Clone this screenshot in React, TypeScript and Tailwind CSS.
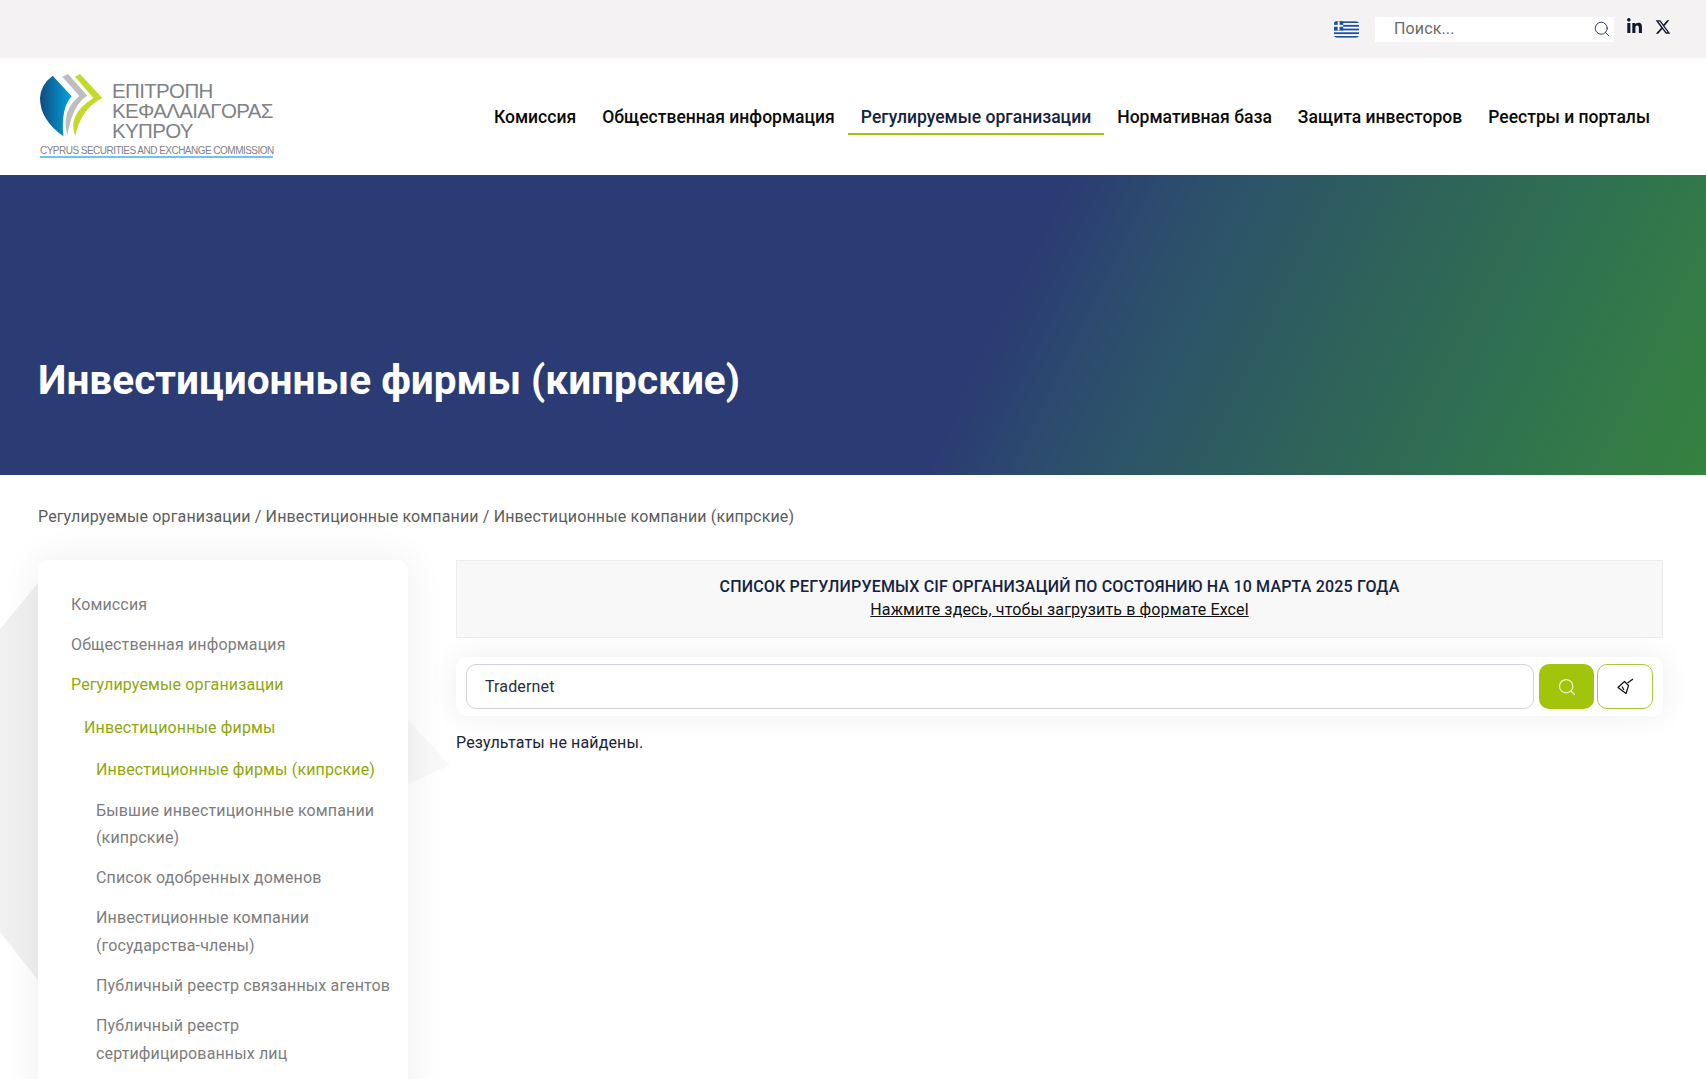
import { Search } from "lucide-react";
import { FaLinkedinIn } from "react-icons/fa";

const nav = [
  "Комиссия",
  "Общественная информация",
  "Регулируемые организации",
  "Нормативная база",
  "Защита инвесторов",
  "Реестры и порталы",
];

function Flag() {
  return (
    <svg width="25" height="17" viewBox="0 0 27 18">
      <defs>
        <clipPath id="flagClip">
          <rect width="27" height="18" rx="3.5" />
        </clipPath>
      </defs>
      <g clipPath="url(#flagClip)">
        <rect width="27" height="18" fill="#fff" />
        <rect y="0" width="27" height="2" fill="#1d4f9c" />
        <rect y="4" width="27" height="2" fill="#1d4f9c" />
        <rect y="8" width="27" height="2" fill="#1d4f9c" />
        <rect y="12" width="27" height="2" fill="#1d4f9c" />
        <rect y="16" width="27" height="2" fill="#1d4f9c" />
        <rect width="10" height="10" fill="#1d4f9c" />
        <rect x="4" width="2" height="10" fill="#fff" />
        <rect y="4" width="10" height="2" fill="#fff" />
      </g>
    </svg>
  );
}

function Logo() {
  return (
    <div className="flex w-[233px] flex-col pt-[15px]">
      <div className="flex h-[73px]">
        <svg width="63" height="65" viewBox="30 25 189 195">
          <defs>
            <linearGradient id="logoBlue" x1="0" x2="1" y1="0" y2="0">
              <stop offset="0" stopColor="#104a80" />
              <stop offset="1" stopColor="#02a5de" />
            </linearGradient>
          </defs>
          <path d="M68 33 L125 95 Q92 130 100 215 Q30 165 30 100 Q32 60 68 33 Z" fill="url(#logoBlue)" />
          <path d="M97 36 L114 28 L172 93 Q128 118 112 212 Q92 140 148 94 Z" fill="#bcbec0" />
          <path d="M135 36 L150 28 L217 100 Q150 135 136 215 Q110 150 190 100 Z" fill="#c5d92d" />
        </svg>
        <div className="ml-[9px] mt-[8px] text-[20.5px] leading-[20px] tracking-[-0.65px] whitespace-nowrap text-[#808285] font-['Liberation_Sans',sans-serif]">
          <div>ΕΠΙΤΡΟΠΗ</div>
          <div>ΚΕΦΑΛΑΙΑΓΟΡΑΣ</div>
          <div>ΚΥΠΡΟΥ</div>
        </div>
      </div>
      <div className="border-b-2 border-[#6ec6ee] text-[10px] leading-[10px] tracking-[-0.52px] whitespace-nowrap text-[#808285] font-['Liberation_Sans',sans-serif]">
        CYPRUS SECURITIES AND EXCHANGE COMMISSION
      </div>
    </div>
  );
}

function SideLink({ text, active, level }: { text: string; active?: boolean; level: number }) {
  const indent = level === 0 ? "ml-[33px]" : level === 1 ? "ml-[46px]" : "ml-[58px]";
  return (
    <a className={`block ${indent} text-[16px] leading-[27px] ${active ? "text-[#8ea80b]" : "text-[#7d7d7d]"}`}>
      {text}
    </a>
  );
}

export default function App() {
  return (
    <div className="relative h-[1079px] overflow-hidden bg-white tracking-[0.14px] font-['Roboto',sans-serif]">
      <div className="flex h-[58px] items-center justify-end bg-[#f4f2f3] pr-[35px]">
        <Flag />
        <div className="ml-[16px] flex h-[25px] w-[239px] items-center justify-between bg-white pl-[19px] pr-[3px]">
          <span className="text-[16px] text-[#6b6b6b]">Поиск...</span>
          <Search size={18} strokeWidth={1.2} className="text-[#1f2d4d]" />
        </div>
        <FaLinkedinIn size={17} className="ml-[12px] mb-[5px] text-[#0f1a2e]" />
        <svg width="16" height="16" viewBox="0 0 24 24" className="ml-[12px] mb-[4px]" fill="#0f1a2e">
          <path d="M18.2 2h3.4l-7.4 8.5L23 22h-6.8l-5.3-7-6.1 7H1.3l7.9-9L1 2h7l4.8 6.4L18.2 2Zm-1.2 18h1.9L7 3.9H5L17 20Z" />
        </svg>
      </div>

      <header className="flex h-[117px] items-start justify-between bg-white pl-[40px] pr-[43px]">
        <Logo />
        <nav className="mt-[40px] flex">
          {nav.map((item, i) => (
            <a
              key={item}
              className={`h-[37px] px-[13px] text-[17.55px] leading-[38px] font-medium tracking-normal whitespace-nowrap ${
                i === 2 ? "border-b-2 border-[#a0c30c] text-[#16233f]" : "text-[#0a0a0a]"
              }`}
            >
              {item}
            </a>
          ))}
        </nav>
      </header>

      <section className="flex h-[300px] items-end bg-[linear-gradient(116deg,#2b3b73_57.5%,#2c4f6c_65%,#2e625a_77%,#30734f_88%,#36823f_100%)] pb-[69px] pl-[38px]">
        <h1 className="text-[40.6px] leading-[52px] font-bold tracking-normal text-white">Инвестиционные фирмы (кипрские)</h1>
      </section>

      <div className="relative">
        <svg className="absolute left-0 top-0" width="470" height="520" viewBox="0 0 470 520">
          <defs>
            <linearGradient id="bgShape" x1="0" x2="1" y1="0" y2="0">
              <stop offset="0" stopColor="#f0f0f0" />
              <stop offset="1" stopColor="#f9f9f9" />
            </linearGradient>
          </defs>
          <polygon points="0,154 38,108 70,95 408,245 450,290 408,309 70,515 38,505 0,457" fill="url(#bgShape)" />
        </svg>

        <div className="relative pl-[38px] pr-[43px] pt-[30px]">
          <div className="text-[16px] leading-[24px] text-[#5c5c5c]">
            Регулируемые организации / Инвестиционные компании / Инвестиционные компании (кипрские)
          </div>

          <div className="mt-[31px] flex items-start gap-[48px]">
            <aside className="h-[600px] w-[370px] shrink-0 rounded-[10px] bg-white pt-[31px] shadow-[0_0_40px_rgba(0,0,0,0.07)]">
              <SideLink level={0} text="Комиссия" />
              <div className="mt-[13px]"><SideLink level={0} text="Общественная информация" /></div>
              <div className="mt-[13px]"><SideLink level={0} active text="Регулируемые организации" /></div>
              <div className="mt-[16px]"><SideLink level={1} active text="Инвестиционные фирмы" /></div>
              <div className="mt-[15px]"><SideLink level={2} active text="Инвестиционные фирмы (кипрские)" /></div>
              <div className="mt-[14px]"><SideLink level={2} text="Бывшие инвестиционные компании" /></div>
              <SideLink level={2} text="(кипрские)" />
              <div className="mt-[13px]"><SideLink level={2} text="Список одобренных доменов" /></div>
              <div className="mt-[13px]"><SideLink level={2} text="Инвестиционные компании" /></div>
              <div className="mt-[1px]"><SideLink level={2} text="(государства-члены)" /></div>
              <div className="mt-[13px]"><SideLink level={2} text="Публичный реестр связанных агентов" /></div>
              <div className="mt-[13px]"><SideLink level={2} text="Публичный реестр" /></div>
              <div className="mt-[1px]"><SideLink level={2} text="сертифицированных лиц" /></div>
            </aside>

            <main className="min-w-0 flex-1">
              <div className="flex h-[78px] flex-col items-center justify-center border border-[#ececec] bg-[#f8f8f8] pb-[2px] text-[16px] leading-[24px]">
                <div className="font-medium tracking-[0.17px] text-[#14233f]">
                  СПИСОК РЕГУЛИРУЕМЫХ CIF ОРГАНИЗАЦИЙ ПО СОСТОЯНИЮ НА 10 МАРТА 2025 ГОДА
                </div>
                <a className="leading-[22px] text-[#111] underline">Нажмите здесь, чтобы загрузить в формате Excel</a>
              </div>

              <div className="mt-[19px] flex h-[59px] items-center rounded-[10px] bg-white px-[10px] shadow-[0_0_30px_rgba(0,0,0,0.07)]">
                <div className="flex h-[45px] flex-1 items-center rounded-[10px] border border-[#d0d4da] bg-white pl-[18px] text-[16px] text-[#27303f]">
                  Tradernet
                </div>
                <button className="ml-[5px] flex h-[45px] w-[55px] items-center justify-center rounded-[10px] bg-[#a2c40c] text-[#eef3cc]">
                  <Search size={20} strokeWidth={1.5} />
                </button>
                <button className="ml-[3px] flex h-[45px] w-[56px] items-center justify-center rounded-[10px] border border-[#a9c839] bg-white">
                  <svg width="17" height="17" viewBox="0 0 17 17" fill="none" stroke="#111" strokeWidth="1.2">
                    <path d="M16 1 L10.5 5" />
                    <path d="M7.5 3.5 L11.5 7.5 L9 15.5 L1 9.5 Z" strokeLinejoin="round" />
                    <path d="M5 8.5 L7 12" />
                  </svg>
                </button>
              </div>

              <p className="mt-[15px] text-[16px] leading-[24px] text-[#1a2435]">Результаты не найдены.</p>
            </main>
          </div>
        </div>
      </div>
    </div>
  );
}
